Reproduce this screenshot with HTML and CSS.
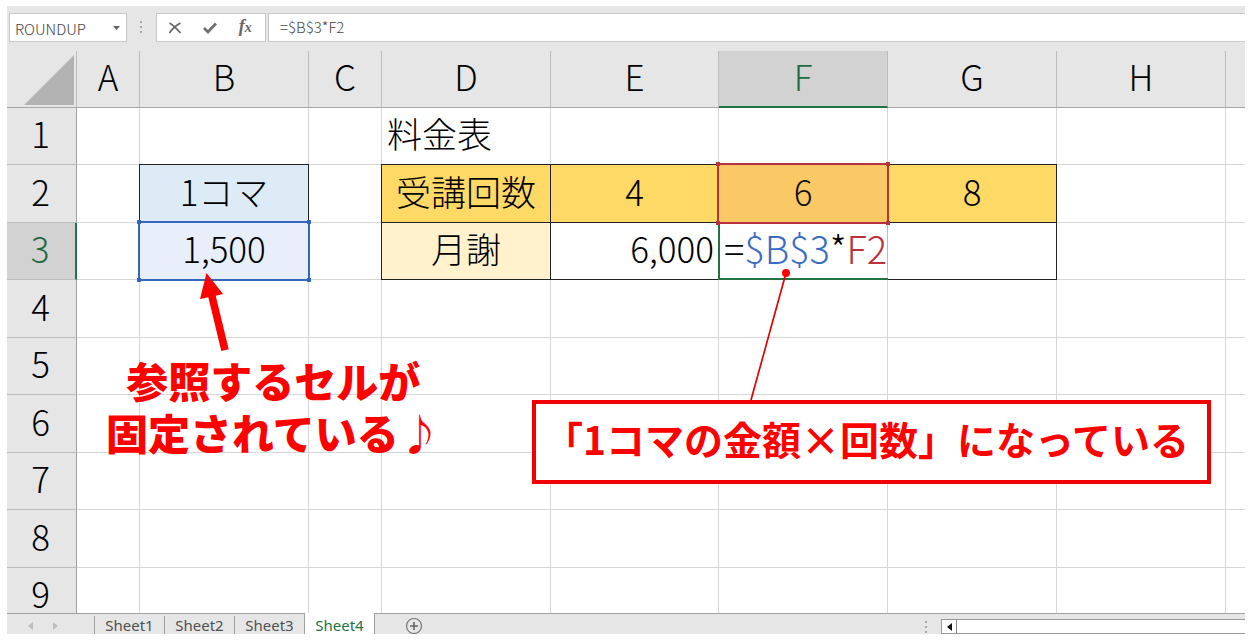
FILE: index.html
```html
<!DOCTYPE html>
<html lang="ja">
<head>
<meta charset="utf-8">
<title>料金表</title>
<link rel="stylesheet" href="styles.css">
</head>
<body>
<div class="app">
  <header class="formula-bar">
    <div class="name-box">
      <input class="name-input" type="text" aria-label="名前ボックス" value="ROUNDUP">
      <button class="name-drop" type="button" aria-label="名前の一覧"><svg width="7" height="4" viewBox="0 0 7 4"><path d="M0 0h7L3.500 4z" fill="#666"/></svg></button>
    </div>
    <svg class="grip" width="3" height="12" viewBox="0 0 3 12" fill="#a6a6a6"><path d="M0 0h2v2H0zM0 5h2v2H0zM0 10h2v2H0z"/></svg>
    <div class="actions">
      <button type="button" aria-label="キャンセル"><svg width="14" height="12" viewBox="0 0 14 12"><path d="M1.500 1C5 3 9 7 12.500 11M12.500 1C9 3 4 7 1.500 11" fill="none" stroke="#666" stroke-width="1.800"/></svg></button>
      <button type="button" aria-label="入力"><svg width="14" height="12" viewBox="0 0 14 12"><path d="M1 6l4 4L13 1.500" fill="none" stroke="#707070" stroke-width="2.800"/></svg></button>
      <button class="fx" type="button" aria-label="関数の挿入"><i>f</i><i class="fx-x">x</i></button>
    </div>
    <input class="formula-input" type="text" aria-label="数式バー" value="=$B$3*F2">
  </header>

  <main class="sheet">
    <table class="cells">
      <colgroup>
        <col class="w-head"><col class="w-a"><col class="w-std"><col class="w-c"><col class="w-std"><col class="w-e"><col class="w-std"><col class="w-std"><col class="w-std"><col>
      </colgroup>
      <thead>
        <tr><th class="corner"><svg width="50" height="50" viewBox="0 0 50 50"><path d="M50 0V50H0z" fill="#b3b3b3"/></svg></th><th scope="col">A</th><th scope="col">B</th><th scope="col">C</th><th scope="col">D</th><th scope="col">E</th><th scope="col" class="current">F</th><th scope="col">G</th><th scope="col">H</th><th></th></tr>
      </thead>
      <tbody>
        <tr><th scope="row">1</th><td></td><td></td><td></td><td class="text">料金表</td><td></td><td></td><td></td><td></td><td></td></tr>
        <tr><th scope="row">2</th><td></td><td class="box sky">1コマ</td><td></td><td class="box gold">受講回数</td><td class="box gold">4</td><td class="box ref ref-red">6<span class="handles"></span></td><td class="box gold">8</td><td></td><td></td></tr>
        <tr><th scope="row" class="current">3</th><td></td><td class="box ref ref-blue">1,500<span class="handles"></span></td><td></td><td class="box cream">月謝</td><td class="box number">6,000</td><td class="box editing"><span class="formula">=<span class="blue">$B$3</span>*<span class="red">F2</span></span></td><td class="box"></td><td></td><td></td></tr>
        <tr><th scope="row">4</th><td></td><td></td><td></td><td></td><td></td><td></td><td></td><td></td><td></td></tr>
        <tr><th scope="row">5</th><td></td><td></td><td></td><td></td><td></td><td></td><td></td><td></td><td></td></tr>
        <tr><th scope="row">6</th><td></td><td></td><td></td><td></td><td></td><td></td><td></td><td></td><td></td></tr>
        <tr><th scope="row">7</th><td></td><td></td><td></td><td></td><td></td><td></td><td></td><td></td><td></td></tr>
        <tr><th scope="row">8</th><td></td><td></td><td></td><td></td><td></td><td></td><td></td><td></td><td></td></tr>
        <tr><th scope="row">9</th><td></td><td></td><td></td><td></td><td></td><td></td><td></td><td></td><td></td></tr>
      </tbody>
    </table>
    <svg class="pointers" width="1238" height="562" viewBox="7 51 1238 562">
      <path d="M206.500 273L223 294L215.700 295.700L228.700 349.300L221.300 351L208.300 297.300L200 299z" fill="#f00"/>
      <path d="M786 273L751 400" stroke="#e00000" stroke-width="1.700"/>
      <circle cx="786" cy="273" r="4" fill="#f00"/>
    </svg>
    <p class="note">参照するセルが<br>固定されている♪</p>
    <p class="callout">「1コマの金額×回数」になっている</p>
  </main>

  <footer class="tab-bar">
    <div class="tab-nav">
      <button type="button" aria-label="前のシート"><svg width="5" height="8" viewBox="0 0 5 8"><path d="M5 0v8L0 4z" fill="#bdbdbd"/></svg></button>
      <button type="button" aria-label="次のシート"><svg width="5" height="8" viewBox="0 0 5 8"><path d="M0 0v8l5-4z" fill="#bdbdbd"/></svg></button>
    </div>
    <button class="tab" type="button">Sheet1</button>
    <button class="tab" type="button">Sheet2</button>
    <button class="tab" type="button">Sheet3</button>
    <button class="tab active" type="button">Sheet4</button>
    <button class="add" type="button" aria-label="新しいシート"><svg width="18" height="18" viewBox="0 0 18 18"><circle cx="9" cy="9" r="7.500" fill="none" stroke="#777" stroke-width="1.200"/><path d="M9 5v8M5 9h8" stroke="#666" stroke-width="1.600"/></svg></button>
    <svg class="grip scroll-grip" width="3" height="12" viewBox="0 0 3 12" fill="#a6a6a6"><path d="M0 0h2v2H0zM0 5h2v2H0zM0 10h2v2H0z"/></svg>
    <div class="scroll">
      <button type="button" aria-label="左へスクロール"><svg width="5" height="8" viewBox="0 0 5 8"><path d="M5 0v8L0 4z" fill="#111"/></svg></button>
    </div>
  </footer>
</div>
</body>
</html>
```
FILE: styles.css
```css
* { box-sizing: border-box; }

body {
  margin: 0;
  background: #fff;
  font-family: "Noto Sans CJK JP", "Liberation Sans", sans-serif;
  font-weight: 300;
}

button, input {
  margin: 0;
  padding: 0;
  border: 0;
  background: none;
  color: inherit;
  font: inherit;
}

svg { display: block; }

.app {
  display: flex;
  flex-direction: column;
  height: 100vh;
  padding: 6px 6px 9px 7px;
}

/* Formula bar */
.formula-bar {
  display: flex;
  flex: none;
  align-items: flex-start;
  height: 45px;
  padding: 7px 0 0 2px;
  background: #e6e6e6;
  color: #444;
  font-size: 15px;
}

.name-box, .actions, .formula-input {
  height: 29px;
  border: 1px solid #c8c8c8;
  background: #fff;
}

.name-box {
  display: flex;
  width: 118px;
  padding: 1px 5px 0;
}

.name-input { flex: 1; min-width: 0; }
.name-drop { width: 8px; }

.grip { flex: none; margin: 8px 13px 0; }

.actions {
  display: flex;
  align-items: center;
  width: 110px;
  padding-right: 2px;
  margin-right: 2px;
}

.actions button {
  display: flex;
  flex: 1;
  justify-content: center;
}

.fx {
  color: #666;
  font: bold 18px/22px "Liberation Serif", serif;
}

.fx-x { font-size: 14px; line-height: 26px; }

.formula-input {
  flex: 1;
  min-width: 0;
  padding: 0 11px 2px;
  border-right: 0;
}

/* Grid */
.sheet {
  position: relative;
  flex: 1;
  min-height: 0;
  overflow: hidden;
}

.cells {
  width: 100%;
  table-layout: fixed;
  border-spacing: 0;
  color: #000;
  font-size: 35px;
  line-height: 50px;
}

.w-head { width: 70px; }
.w-a { width: 63px; }
.w-std { width: 169px; }
.w-c { width: 73px; }
.w-e { width: 168px; }

.cells tr { height: 58px; }
.cells thead tr, .cells tbody tr:nth-child(odd) { height: 57px; }

.cells th, .cells td {
  position: relative;
  padding: 0 0 6px;
  border: 0 solid #d6d6d6;
  border-width: 0 1px 1px 0;
  font-weight: inherit;
  text-align: center;
  white-space: nowrap;
}

.cells th {
  border-color: #bcbcbc;
  background: #e6e6e6;
}

.cells thead th { border-bottom-color: #a6a6a6; }
.cells tbody th { padding-right: 2px; border-right-color: #a0a0a0; }
.cells thead th:last-child { border-right: 0; }
.cells tbody td:last-child { border-right: 0; }

.cells th.current {
  background: #d2d2d2;
  color: #1e6b41;
}

.cells thead th.current { padding-bottom: 5px; border-bottom: 2px solid #217346; }
.cells tbody th.current { border-right: 2px solid #217346; }

.cells .corner { padding: 2px 2px 0 0; }
.corner svg { margin-left: auto; }

.cells .text { padding-left: 5px; text-align: left; }
.cells .number { padding-right: 4px; text-align: right; }

.box::after {
  position: absolute;
  inset: -1px;
  border: 1px solid #222;
  content: "";
}

.sky { background: #ddebf7; }
.gold { background: #ffd966; }
.cream { background: #fff2cc; }

.ref { z-index: 3; }
.ref::after { inset: -2px; border-width: 2px; }
.ref-red { background: #fac864; color: #111; --mark: #b8323c; }
.ref-blue { background: #e9effa; --mark: #3566bd; }
.ref::after { border-color: var(--mark); }

.handles {
  position: absolute;
  z-index: 1;
  inset: -3px;
  background:
    linear-gradient(var(--mark), var(--mark)) 0 0 / 4px 4px no-repeat,
    linear-gradient(var(--mark), var(--mark)) 100% 0 / 4px 4px no-repeat,
    linear-gradient(var(--mark), var(--mark)) 0 100% / 4px 4px no-repeat,
    linear-gradient(var(--mark), var(--mark)) 100% 100% / 4px 4px no-repeat;
}

.cells .editing {
  z-index: 2;
  padding-left: 5px;
  font-size: 38px;
  text-align: left;
}

.editing::after { border: 2px solid #217346; border-width: 1px 0 2px 2px; }

.formula {
  display: inline-block;
  border-right: 1px solid #bbb;
  background: #fff;
}

.blue { color: #3a6cc6; }
.red { color: #b8323c; }

/* Annotations */
.pointers {
  position: absolute;
  z-index: 5;
  top: 0;
  left: 0;
}

.note, .callout {
  position: absolute;
  z-index: 4;
  margin: 0;
  color: #f00;
  text-align: center;
  white-space: nowrap;
}

.note {
  top: 303px;
  left: 99px;
  font-size: 42px;
  font-weight: 900;
  line-height: 52px;
}

.callout {
  top: 349px;
  left: 525px;
  width: 679px;
  padding: 5px 8px 13px;
  border: 4px solid #f00000;
  background: #fff;
  font-size: 39px;
  font-weight: 700;
  line-height: 58px;
  text-align: left;
}

/* Sheet tabs */
.tab-bar {
  display: flex;
  flex: none;
  height: 21px;
  border-top: 1px solid #a0a0a0;
  background: #e6e6e6;
  color: #505050;
  font: 400 15px/20px "Noto Sans", sans-serif;
}

.tab-nav {
  display: flex;
  gap: 20px;
  align-items: center;
  width: 87px;
  padding: 4px 0 0 21px;
}

.tab {
  width: 70px;
  margin-top: 2px;
  border-left: 1px solid #a0a0a0;
  line-height: 16px;
}

.tab.active {
  width: 71px;
  margin-top: -1px;
  padding-top: 2px;
  border-right: 1px solid #a0a0a0;
  background: #fff;
  color: #217346;
}

.add { margin: 3px auto 0 30px; height: 17px; overflow: hidden; }

.scroll-grip { margin: 7px 13px 0; }

.scroll {
  width: 304px;
  height: 15px;
  margin-top: 5px;
  border: 1px solid #999;
  border-right: 0;
  background: #fff;
}

.scroll button {
  display: flex;
  align-items: center;
  justify-content: center;
  width: 15px;
  height: 13px;
  border-right: 1px solid #888;
}
```
